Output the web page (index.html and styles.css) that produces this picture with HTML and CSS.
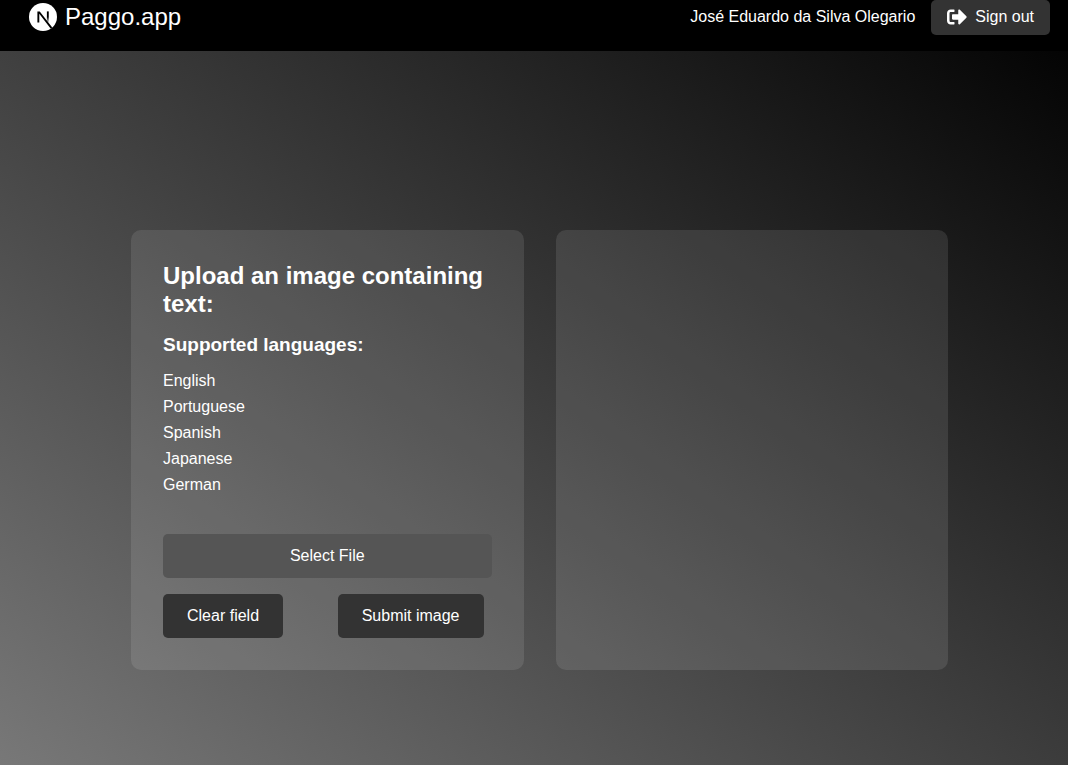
FILE: index.html
```html
<!DOCTYPE html>
<html lang="en">
<head>
<meta charset="utf-8">
<meta name="viewport" content="width=device-width, initial-scale=1">
<title>Paggo.app</title>
<link rel="stylesheet" href="styles.css">
</head>
<body>
<header class="header">
  <a class="brand" href="#">
    <svg class="brand-logo" viewBox="0 0 180 180" aria-hidden="true">
      <defs>
        <linearGradient id="stem" x1="121" y1="54" x2="121" y2="126" gradientUnits="userSpaceOnUse">
          <stop offset="0.5" stop-color="#000"/>
          <stop offset="1" stop-color="#000" stop-opacity="0.1"/>
        </linearGradient>
      </defs>
      <circle cx="90" cy="90" r="90" fill="#fff"/>
      <path d="M149.5 157.5L69.1 54H54v72h12.1V69.4L140 164.800c3.300-2.200 6.500-4.700 9.500-7.300z" fill="#000"/>
      <rect x="115" y="54" width="12" height="72" fill="url(#stem)"/>
    </svg>
    <span>Paggo.app</span>
  </a>
  <div class="account">
    <span class="account-name">José Eduardo da Silva Olegario</span>
    <button class="button button-signout" type="button">
      <svg class="signout-icon" viewBox="0 51 512 410" aria-hidden="true">
        <path fill="#fff" d="M497 273L329 441c-15 15-41 4.500-41-17v-96H152c-13.300 0-24-10.700-24-24v-96c0-13.300 10.700-24 24-24h136V88c0-21.400 25.900-32 41-17l168 168c9.300 9.400 9.300 24.600 0 34zM192 436v-40c0-6.600-5.400-12-12-12H96c-17.700 0-32-14.300-32-32V160c0-17.700 14.300-32 32-32h84c6.600 0 12-5.400 12-12V76c0-6.600-5.400-12-12-12H96c-53 0-96 43-96 96v192c0 53 43 96 96 96h84c6.600 0 12-5.400 12-12z"/>
      </svg>
      Sign out
    </button>
  </div>
</header>
<main class="content">
  <section class="card">
    <h2 class="card-title">Upload an image containing text:</h2>
    <h3 class="card-subtitle">Supported languages:</h3>
    <ul class="languages">
      <li>English</li>
      <li>Portuguese</li>
      <li>Spanish</li>
      <li>Japanese</li>
      <li>German</li>
    </ul>
    <button class="button button-select" type="button">Select File</button>
    <div class="actions">
      <button class="button" type="button">Clear field</button>
      <button class="button" type="button">Submit image</button>
    </div>
  </section>
  <section class="card" aria-label="Result"></section>
</main>
</body>
</html>
```
FILE: styles.css
```css
* {
  box-sizing: border-box;
  margin: 0;
  padding: 0;
}

body {
  min-height: 100vh;
  display: flex;
  flex-direction: column;
  background: linear-gradient(to top right, #787878, #000);
  color: #fff;
  font: 16px/18px "Liberation Sans", Arial, sans-serif;
}

.header {
  display: flex;
  justify-content: space-between;
  align-items: flex-start;
  padding: 0 18px 16px 29px;
  background: #000;
}

.brand {
  display: flex;
  align-items: center;
  gap: 8px;
  padding-top: 3px;
  color: inherit;
  font-size: 24px;
  line-height: 28px;
  text-decoration: none;
}

.brand-logo {
  width: 28px;
  height: 28px;
}

.account {
  display: flex;
  align-items: flex-start;
  gap: 16px;
}

.account-name {
  padding-top: 8px;
}

.button {
  padding: 13px 24px;
  border: 0;
  border-radius: 5px;
  background: #333;
  color: inherit;
  font: inherit;
  cursor: pointer;
}

.button-signout {
  display: flex;
  align-items: center;
  gap: 8px;
  padding: 8px 16px 9px;
}

.signout-icon {
  width: 20px;
  height: 16px;
}

.content {
  flex: 1;
  display: flex;
  align-items: flex-start;
  gap: 32px;
  padding: 179px 120px 64px 131px;
}

.card {
  flex: 1;
  display: flex;
  flex-direction: column;
  min-height: 440px;
  padding: 32px;
  border-radius: 10px;
  background: rgba(255, 255, 255, 0.1);
}

.card-title {
  margin-bottom: 16px;
  font-size: 24px;
  line-height: 28px;
}

.card-subtitle {
  margin-bottom: 16px;
  font-size: 19px;
  line-height: 22px;
}

.languages {
  display: flex;
  flex-direction: column;
  gap: 8px;
  margin-bottom: 40px;
  list-style: none;
}

.button-select {
  margin-bottom: 16px;
  background: #555;
}

.actions {
  display: flex;
  justify-content: space-between;
  padding-right: 8px;
}
```
